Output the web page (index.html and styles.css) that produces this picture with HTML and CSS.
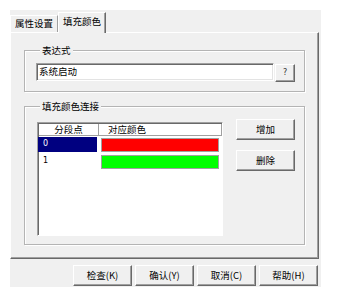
FILE: index.html
```html
<!DOCTYPE html>
<html lang="zh-CN">
<head>
<meta charset="utf-8">
<title>填充颜色</title>
<link rel="stylesheet" href="styles.css">
</head>
<body>
<div class="window">
  <div class="tabs">
    <div class="tab">属性设置</div>
    <div class="tab active">填充颜色</div>
  </div>
  <div class="panel">
    <div class="group g1">
      <div class="legend">表达式</div>
      <div class="expr-row">
        <div class="input">系统启动</div>
        <div class="btn q">?</div>
      </div>
    </div>
    <div class="group g2">
      <div class="legend">填充颜色连接</div>
      <div class="conn-row">
        <div class="list">
          <div class="list-head">
            <div class="h1">分段点</div>
            <div class="h2">对应颜色</div>
          </div>
          <div class="list-row">
            <div class="c1 sel">0</div>
            <div class="c2 red"></div>
          </div>
          <div class="list-row">
            <div class="c1">1</div>
            <div class="c2 green"></div>
          </div>
        </div>
        <div class="side-btns">
          <div class="btn side">增加</div>
          <div class="btn side">删除</div>
        </div>
      </div>
    </div>
  </div>
  <div class="footer">
    <div class="btn foot">检查(K)</div>
    <div class="btn foot">确认(Y)</div>
    <div class="btn foot">取消(C)</div>
    <div class="btn foot">帮助(H)</div>
  </div>
</div>
</body>
</html>
```

FILE: styles.css
```css
* { box-sizing: border-box; }

body {
  margin: 0;
  padding: 10px 0 0 10px;
  background: #fff;
  font-family: "Noto Sans CJK SC", "Noto Sans", sans-serif;
  font-size: 9.5px;
  color: #000;
}

.window {
  width: 311px;
  height: 277px;
  background: #f0f0f0;
  display: flex;
  flex-direction: column;
}

.tabs {
  height: 22px;
  display: flex;
  align-items: flex-end;
}

.tab {
  width: 48px;
  height: 17px;
  line-height: 15px;
  text-align: center;
  border-top: 1px solid #fff;
  border-left: 1px solid #fff;
  border-right: 1px solid #a0a0a0;
}

.tab.active {
  position: relative;
  z-index: 1;
  height: 21px;
  margin-bottom: -1px;
  line-height: 17px;
  background: #f0f0f0;
  border-right: 1px solid #696969;
  box-shadow: inset -1px 0 0 #a0a0a0;
}

.panel {
  width: 309px;
  height: 227px;
  border-top: 1px solid #fff;
  border-left: 1px solid #fff;
  border-right: 1px solid #696969;
  border-bottom: 1px solid #696969;
  box-shadow: inset -1px -1px 0 #a0a0a0;
  padding: 0 13px;
}

.group {
  border: 1px solid #b4b4b4;
  box-shadow: inset 1px 1px 0 #fff, 1px 1px 0 #fff;
}

.g1 {
  margin-top: 17px;
  height: 42px;
  padding: 0 9px 0 11px;
}

.g2 {
  margin-top: 14px;
  height: 139px;
  padding: 0 9px 0 11px;
}

.legend {
  width: max-content;
  height: 12px;
  line-height: 12px;
  margin: -7px 0 0 4px;
  padding: 0 2px;
  background: #f0f0f0;
}

.expr-row {
  display: flex;
  align-items: flex-start;
  margin-top: 7px;
}

.input {
  width: 238px;
  height: 18px;
  line-height: 15px;
  padding-left: 2px;
  background: #fff;
  border-top: 1px solid #a0a0a0;
  border-left: 1px solid #a0a0a0;
  border-right: 1px solid #fff;
  border-bottom: 1px solid #fff;
  box-shadow: inset 1px 1px 0 #696969, inset -1px -1px 0 #e3e3e3;
}

.btn {
  background: #f0f0f0;
  text-align: center;
  border-top: 1px solid #fff;
  border-left: 1px solid #fff;
  border-right: 1px solid #696969;
  border-bottom: 1px solid #696969;
  box-shadow: inset -1px -1px 0 #a0a0a0;
}

.btn.q {
  width: 20px;
  height: 18px;
  line-height: 15px;
  margin: 1px 0 0 1px;
  font-family: "DejaVu Sans", sans-serif;
  font-size: 8px;
  color: #333;
}

.conn-row {
  display: flex;
  align-items: flex-start;
  margin-top: 7px;
}

.list {
  width: 186px;
  height: 114px;
  margin-top: 3px;
  margin-left: 1px;
  background: #fff;
  border-top: 1px solid #a0a0a0;
  border-left: 1px solid #a0a0a0;
  border-right: 1px solid #fff;
  border-bottom: 1px solid #fff;
  box-shadow: inset 1px 1px 0 #696969;
}

.list-head {
  display: flex;
  height: 12px;
  margin-left: 1px;
  margin-top: 1px;
  border-bottom: 1px solid #a0a0a0;
  border-right: 1px solid #a0a0a0;
}

.h1 {
  width: 60px;
  text-align: center;
  line-height: 11px;
  border-right: 1px solid #a0a0a0;
}

.h2 {
  padding-left: 9px;
  line-height: 11px;
}

.list-row {
  display: flex;
  height: 17px;
  padding-top: 1px;
}

.c1 {
  width: 59px;
  height: 15px;
  line-height: 14px;
  padding-left: 5px;
  font-family: "DejaVu Sans", sans-serif;
  font-size: 8px;
}

.c1.sel {
  background: #000080;
  color: #fff;
}

.c2 {
  width: 118px;
  height: 14px;
  margin: 1px 0 0 4px;
  border: 1px solid #a0a0a0;
}

.red { background: #ff0000; }
.green { background: #00ff00; }

.side-btns {
  display: flex;
  flex-direction: column;
  gap: 10px;
  margin-left: 13px;
}

.btn.side {
  width: 59px;
  height: 21px;
  line-height: 19px;
}

.footer {
  display: flex;
  justify-content: flex-end;
  gap: 3px;
  padding: 6px 3px 0 0;
}

.btn.foot {
  width: 59px;
  height: 21px;
  line-height: 19px;
}
```
